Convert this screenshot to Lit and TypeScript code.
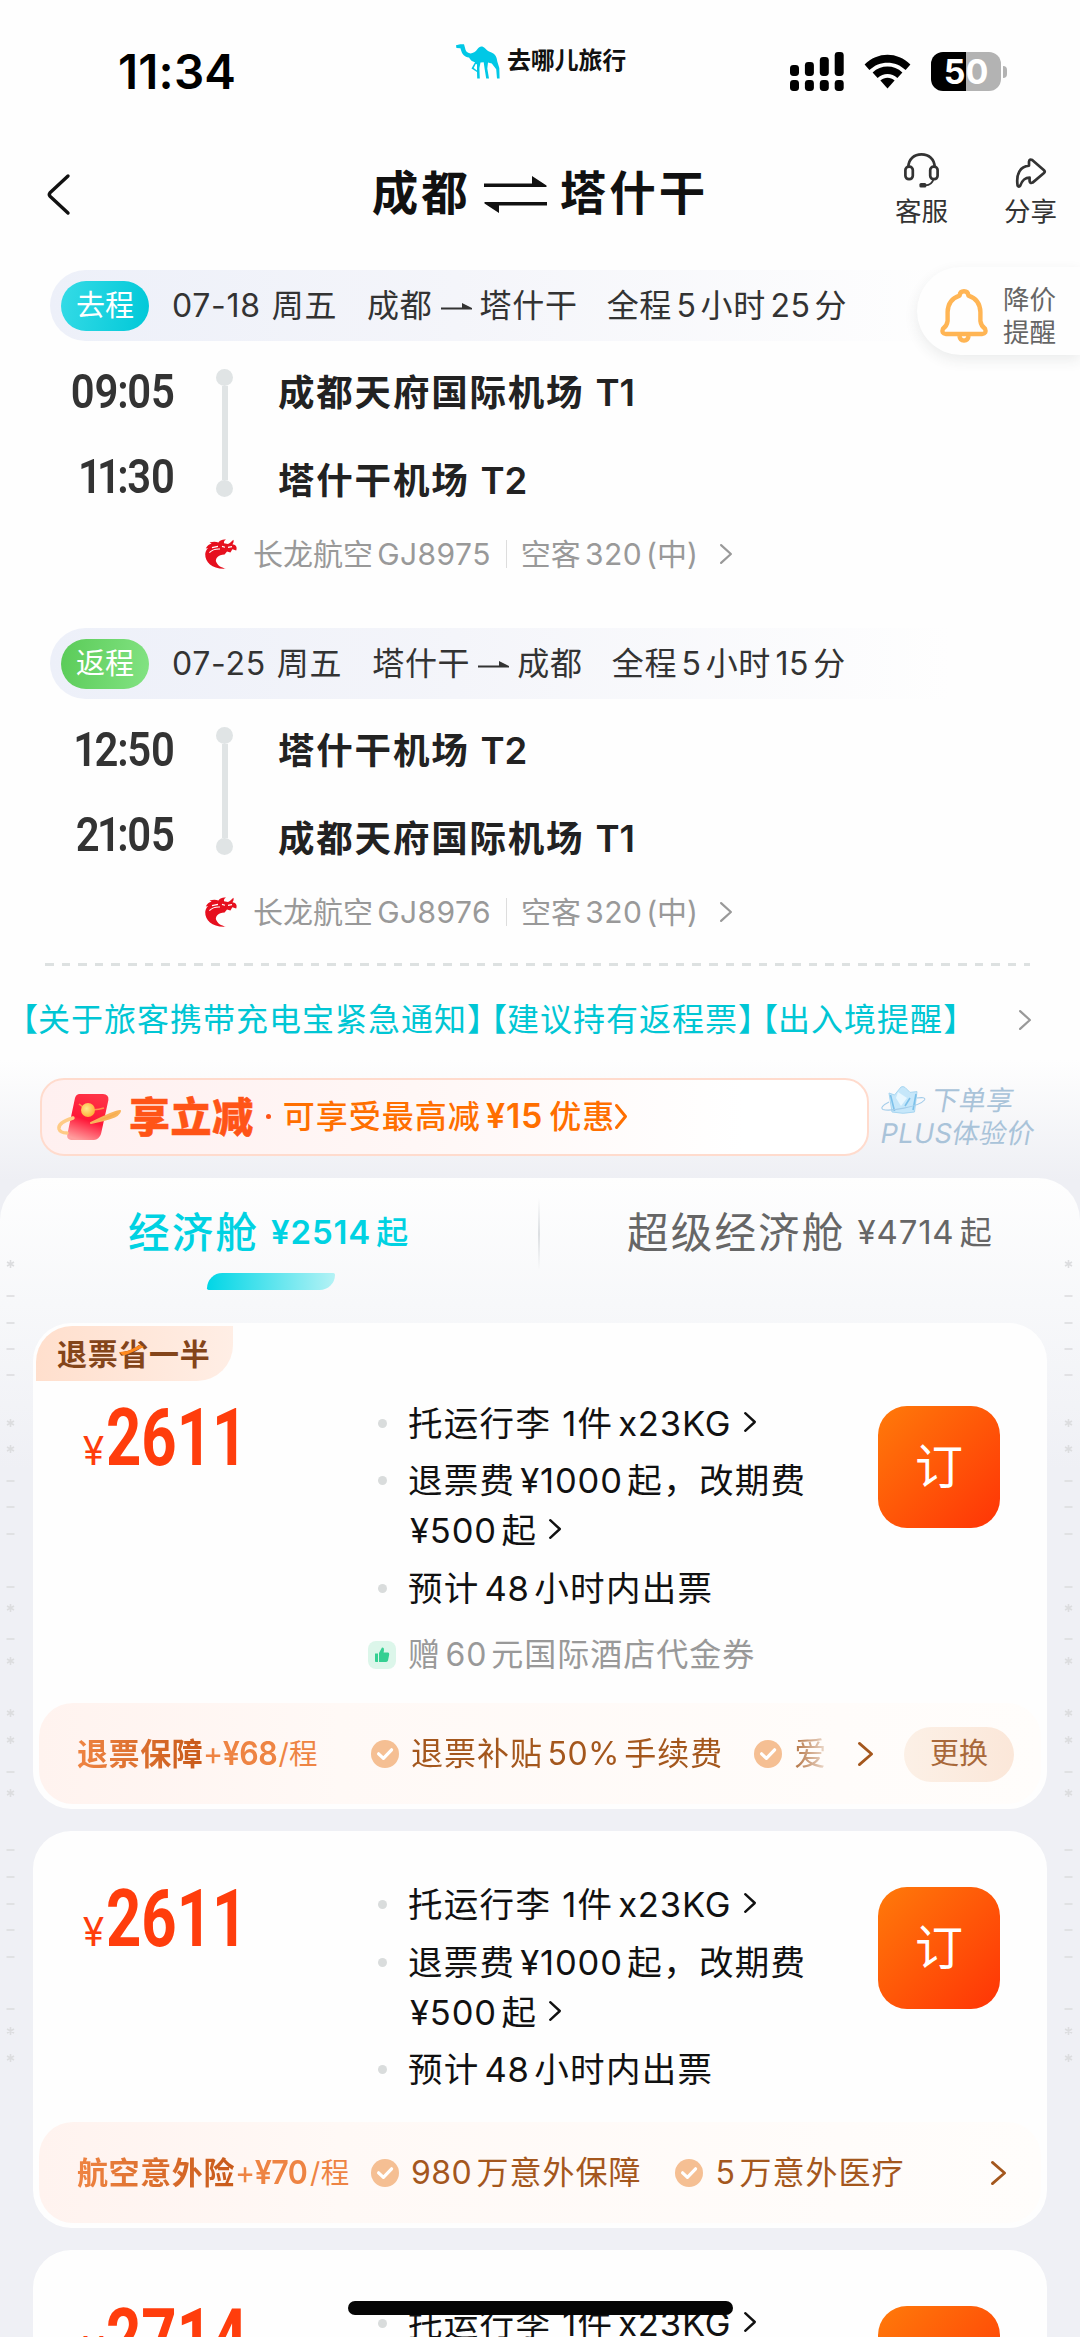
import { LitElement, html, css, svg, nothing } from "lit";
import { customElement, property } from "lit/decorators.js";

/** Wraps latin / digit runs so that they get a little air beside Chinese characters. */
const mix = (text: string) =>
  text
    .split(/([A-Za-z0-9¥%]+)/)
    .filter((part) => part !== "")
    .map((part, i) =>
      /^[A-Za-z0-9¥%]/.test(part) ? html`<span class="n ${i === 0 ? "lead" : ""}">${part}</span>` : part
    );

const base = css`
  * {
    box-sizing: border-box;
  }
  svg {
    display: block;
    flex: none;
    overflow: visible;
  }
  .n {
    margin: 0 0.13em 0 0.14em;
    letter-spacing: 0.015em;
  }
  .n.lead {
    margin-left: 0;
  }
`;

const chevron = (w: number, h: number, stroke: number) => html`
  <svg class="chevron" width=${w} height=${h} viewBox="0 0 ${w} ${h}" fill="none" stroke="currentColor"
    stroke-width=${stroke} stroke-linecap="round" stroke-linejoin="round">
    <path d="M${stroke / 2} ${stroke / 2} L${w - stroke / 2} ${h / 2} L${stroke / 2} ${h - stroke / 2}" />
  </svg>
`;

@customElement("status-bar")
class StatusBar extends LitElement {
  static styles = [
    base,
    css`
      :host {
        display: grid;
        grid-template-columns: 455px 1fr 217px;
        margin-right: 73px;
        height: 143px;
        align-items: center;
        color: #000;
      }
      .time {
        padding-left: 118px;
        font-size: 47.5px;
        font-weight: 600;
        line-height: 50px;
        letter-spacing: 0.2px;
      }
      .brand {
        display: flex;
        align-items: center;
        gap: 7px;
        margin-top: -21px;
      }
      .brand b {
        font-size: 24px;
        line-height: 34px;
        letter-spacing: -0.2px;
        color: #111;
      }
      .icons {
        display: flex;
        align-items: center;
        justify-content: space-between;
      }
      .battery {
        display: grid;
        width: 70px;
        height: 39px;
        place-items: center;
        border-radius: 12px;
        background: linear-gradient(90deg, #000 50%, #b3b3b3 50%);
        color: #fff;
        font-size: 34px;
        font-weight: 700;
        line-height: 39px;
        margin-right: 2px;
      }
      .power {
        display: flex;
        align-items: center;
      }
      .nub {
        width: 4px;
        height: 12px;
        border-radius: 0 4px 4px 0;
        background: #b3b3b3;
      }
    `,
  ];
  render() {
    return html`
      <div class="time">11:34</div>
      <div class="brand">
        <svg width="45" height="35" viewBox="0 0 45 35" fill="#00c8e6">
          <path d="M1 1.2 L5.2 .2 L9 .3 L10 3.8 C10.5 7 12 9 15.5 9.6 C18 9 20.5 8 22.5 5 C24.5 1.9 27.5 1.7 30 4.2 C32 6.5 34 7.6 36.5 8.6 C40.5 10.3 41.8 13.5 42.3 17.5 L44.3 24 L44.6 34.6 L42 34.6 L41.2 25.2 L36.8 19.6 L33 18.4 L32.3 24.5 L34 34.6 L31.2 34.6 L29.6 24.5 L28.7 18.2 L25.5 18.6 L24.4 24 L24.8 34.6 L22.2 34.6 L22 28 L16.5 24.4 L20 18.3 C17 17.6 15.6 16.4 14 13.6 C9.5 12.8 7.2 10.6 6.2 6.8 L5.4 4.2 L1.4 4 Z M20.7 20 L18.7 24 L22 26.5 L22 20.2 Z" fill-rule="evenodd" />
        </svg>
        <b>去哪儿旅行</b>
      </div>
      <div class="icons">
        <svg width="54" height="39" viewBox="0 0 54 39">
          ${[13, 10, 5, 0].map(
            (y, i) => svg`<rect x=${i * 14.9} y=${y} width="9" height=${24 - y} rx="3.4" />
              <rect x=${i * 14.9} y="28" width="9" height="11" rx="3.4" />`
          )}
        </svg>
        <svg width="47" height="36" viewBox="0 0 47 36">
          <path d="M0.6 10.6 C13.5 -2.6 33.5 -2.6 46.4 10.6 L41.6 16 C31.5 6.2 15.5 6.2 5.4 16 Z" />
          <path d="M8.6 18.5 C17 10.6 30 10.6 38.4 18.5 L33.4 24 C27.6 18.8 19.4 18.8 13.6 24 Z" />
          <path d="M16.4 26.4 C20.6 23 26.4 23 30.6 26.4 L23.5 34.6 Z" />
        </svg>
        <div class="power">
          <div class="battery">50</div>
          <div class="nub"></div>
        </div>
      </div>
    `;
  }
}

@customElement("nav-bar")
class NavBar extends LitElement {
  static styles = [
    base,
    css`
      :host {
        display: grid;
        grid-template-columns: 1fr auto 1fr;
        height: 98px;
        color: #111;
      }
      .back {
        align-self: center;
        padding: 4px 0 0 47px;
      }
      h1 {
        display: flex;
        align-items: center;
        gap: 16px;
        margin: 0;
        padding-top: 2px;
        align-self: center;
        font-size: 46.5px;
        font-weight: 700;
        line-height: 60px;
        letter-spacing: 3px;
      }
      .swap {
        margin: 2px 0 0 -3px;
      }
      h1 span:last-child {
        margin-left: -3px;
      }
      .actions {
        display: flex;
        justify-content: flex-end;
        gap: 56px;
        padding-right: 23px;
        color: #333;
        font-size: 26.5px;
        line-height: 32px;
      }
      .action {
        display: flex;
        flex-direction: column;
        align-items: center;
        padding-top: 10px;
        gap: 7px;
      }
      .share {
        padding-top: 15px;
        gap: 7px;
      }
    `,
  ];
  render() {
    return html`
      <div class="back">
        <svg width="23" height="41" viewBox="0 0 23 41" fill="none" stroke="#111" stroke-width="3.4" stroke-linecap="round" stroke-linejoin="round">
          <path d="M21 2 L3 18.8 Q1.6 20.5 3 22.2 L21 39" />
        </svg>
      </div>
      <h1>
        <span>成都</span>
        <svg class="swap" width="63" height="37" viewBox="0 0 63 37" fill="#111">
          <path d="M0 7.5 H48 V0 L62.5 9.5 V11 H0 Z" />
          <path d="M63 29.5 H15 V37 L.5 27.5 V26 H63 Z" />
        </svg>
        <span>塔什干</span>
      </h1>
      <div class="actions">
        <div class="action">
          <svg width="35" height="35" viewBox="0 0 35 35" fill="none" stroke="#333" stroke-width="2.7">
            <path d="M4.3 14 C4.6 6 10 1.4 17.5 1.4 C25 1.4 30.4 6 30.7 14" />
            <rect x="1.4" y="13.6" width="7.4" height="12.6" rx="3.5" />
            <rect x="26.2" y="13.6" width="7.4" height="12.6" rx="3.5" />
            <path d="M29.4 26.5 C28.4 30 25.6 32.2 21.5 32.4" stroke-width="1.8" />
            <rect x="15.4" y="30" width="7" height="4.6" rx="1.6" fill="#333" stroke="none" />
          </svg>
          <span>客服</span>
        </div>
        <div class="action share">
          <svg width="30" height="30" viewBox="0 0 30 30" fill="none" stroke="#333" stroke-width="2.7" stroke-linejoin="round">
            <path d="M1.6 27.6 C-.2 15.5 4.5 8.4 13 7.6 L13 3.6 Q13.5 .6 16.2 2 L28 12.2 Q29.4 13.6 28 15 L16.6 24.6 Q14 25.6 13.6 23 L13.6 19.6 C8.6 19.6 6.4 22 4.4 27.4 Q2.8 29.6 1.6 27.6 Z" />
          </svg>
          <span>分享</span>
        </div>
      </div>
    `;
  }
}

interface Leg {
  kind: "out" | "back";
  label: string;
  date: string;
  weekday: string;
  from: string;
  to: string;
  total: string;
  times: [string, string];
  airports: [string, string];
  flight: string;
  plane: string;
}

@customElement("flight-leg")
class FlightLeg extends LitElement {
  @property({ attribute: false }) leg!: Leg;
  static styles = [
    base,
    css`
      :host {
        display: block;
      }
      .head {
        display: flex;
        align-items: center;
        width: 900px;
        height: 71px;
        margin-left: 50px;
        padding-left: 11px;
        border-radius: 36px 0 0 36px;
        background: linear-gradient(90deg, #edf0f9, #f4f5fa 45%, #fefefe);
        color: #333;
        font-size: 32px;
        line-height: 44px;
        letter-spacing: 0.7px;
      }
      .badge {
        width: 88px;
        height: 50px;
        border-radius: 25px;
        margin-right: 23px;
        background: linear-gradient(100deg, #35dbe6, #00c8d8);
        color: #fff;
        font-size: 29px;
        line-height: 50px;
        text-align: center;
        letter-spacing: 0;
      }
      .badge.back {
        background: linear-gradient(100deg, #5acb58, #83e383);
      }
      .weekday {
        margin-left: 11px;
      }
      .route {
        display: flex;
        align-items: center;
        gap: 8px;
        margin: 0 29px 0 30px;
      }
      .stops {
        display: grid;
        grid-template-columns: 175px 17px 1fr;
        height: 178px;
      }
      .times,
      .airports {
        display: flex;
        flex-direction: column;
        line-height: 50px;
      }
      .times {
        padding-top: 26px;
        gap: 35px;
        font-family: Roboto, sans-serif;
        font-size: 47.5px;
        font-weight: 650;
        color: #333;
        text-align: right;
        transform: scaleX(0.88);
        transform-origin: right;
      }
      .colon {
        margin: 0 -1.5px;
      }
      .one {
        margin: 0 -2.8px;
      }
      .track {
        display: flex;
        flex-direction: column;
        align-items: center;
        width: 17px;
        height: 128px;
        margin: 28px 0 0 41px;
      }
      .dot {
        width: 17px;
        height: 17px;
        border-radius: 50%;
        background: #e0e4e5;
      }
      .line {
        flex: 1;
        width: 6px;
        background: #e0e4e5;
      }
      .airports {
        padding: 27px 0 0 86px;
        gap: 38px;
        font-size: 36.5px;
        font-weight: 600;
        letter-spacing: 1.8px;
        color: #222;
      }
      .airports .n {
        margin-left: 0;
        letter-spacing: 0;
        font-size: 36.5px;
      }
      .flight {
        display: flex;
        align-items: center;
        height: 70px;
        padding-left: 204px;
        color: #999;
        font-size: 30px;
        line-height: 40px;
      }
      .logo {
        margin-right: 15px;
      }
      .sep {
        width: 1px;
        height: 28px;
        margin: 0 14px 0 11px;
        background: #ddd;
      }
      .chevron {
        margin-left: 22px;
      }
    `,
  ];
  render() {
    const l = this.leg;
    return html`
      <div class="head">
        <div class="badge ${l.kind}">${l.label}</div>
        <div>${l.date}</div>
        <div class="weekday">${l.weekday}</div>
        <div class="route">
          <span>${l.from}</span>
          <svg width="31" height="8" viewBox="0 0 31 8" fill="#333"><path d="M0 5.4 H21 V1 L31 6 V7.4 H0 Z" /></svg>
          <span>${l.to}</span>
        </div>
        <div>${mix(l.total)}</div>
      </div>
      <div class="stops">
        <div class="times">
          ${l.times.map(
            (t) => html`<div>${[...t].map((c) =>
              c === ":" ? html`<span class="colon">:</span>` : c === "1" ? html`<span class="one">1</span>` : c
            )}</div>`
          )}
        </div>
        <div class="track"><div class="dot"></div><div class="line"></div><div class="dot"></div></div>
        <div class="airports">${l.airports.map((a) => html`<div>${mix(a)}</div>`)}</div>
      </div>
      <div class="flight">
        <svg class="logo" width="34" height="30" viewBox="0 0 34 30" fill="#e60f1e">
          <path d="M22 29.6 C9 30.5 1 24 1.2 15 C1.6 12 2.6 10.4 4.2 9 L1.8 9.6 C3 6.8 5 5.4 7.6 4.8 L5.6 3.6 C9 2.4 12 2.6 14.4 3.4 C16.4 .6 19.4 .2 22 .6 C20.4 1.6 19.8 2.6 20 4.2 L24 5 C26 4.2 27.4 2.6 29.4 .8 C30 2.6 29.4 4 28.4 5.2 L31 6 C32.8 7.6 33 9.6 32.2 11.4 L28.4 10.2 L26.4 13.4 L23 12.6 L20.6 15.4 C14 16 11.4 19 12 22.6 C13.4 26.4 17 28.8 22 29.6 Z" />
          <path d="M8 8.6 L14 7.4 M5.4 13.6 C8 10.8 12 9.8 16 10 M18 7.4 L21 8.2 M24 8.4 L28 7.6" stroke="#fff" stroke-width="1.1" fill="none" />
        </svg>
        <span>${mix(l.flight)}</span>
        <span class="sep"></span>
        <span>${mix(l.plane)}</span>
        ${chevron(12, 20, 2.2)}
      </div>
    `;
  }
}

interface Fare {
  tag?: string;
  price: string;
  gift?: string;
  cover?: { name: string; price: string; perks: string[]; swap: boolean };
}

@customElement("fare-card")
class FareCard extends LitElement {
  @property({ attribute: false }) fare!: Fare;
  static styles = [
    base,
    css`
      :host {
        display: block;
        position: relative;
        margin: 0 33px;
        padding-bottom: 5px;
        border-radius: 38px;
        background: #fefefe;
      }
      .tag {
        position: absolute;
        left: 3px;
        top: 3px;
        width: 197px;
        height: 55px;
        padding-left: 21px;
        border-radius: 36px 0 36px 0;
        background: linear-gradient(90deg, #ffdfcd, #ffeee5);
        color: #84451a;
        font-size: 30px;
        font-weight: 700;
        line-height: 56px;
        letter-spacing: 0.7px;
      }
      .tick {
        position: absolute;
        left: 84px;
        top: 19px;
      }
      .body {
        display: grid;
        grid-template-columns: 335px 510px 122px;
        align-items: start;
      }
      .tagged {
        padding-top: 27px;
      }
      .price {
        display: flex;
        align-items: baseline;
        padding: 48px 0 0 48px;
        color: #ff3d0c;
        line-height: 80px;
      }
      .yen {
        display: flex;
        justify-content: center;
        width: 25px;
        font-size: 39px;
      }
      .amount {
        font-family: Roboto, sans-serif;
        font-size: 79px;
        font-weight: 700;
        transform: scaleX(0.78);
        transform-origin: left;
      }
      .facts {
        margin: 0;
        padding: 49px 0 27px;
        list-style: none;
        display: flex;
        flex-direction: column;
        gap: 7.5px;
      }
      .facts.gifted {
        padding-bottom: 23px;
      }
      .facts li {
        display: grid;
        grid-template-columns: 29px 1fr;
        column-gap: 11px;
        color: #111;
        font-size: 34.5px;
        line-height: 50px;
        letter-spacing: 1.3px;
        white-space: nowrap;
      }
      .facts .yens {
        margin-left: 2px;
      }
      .facts .n {
        letter-spacing: 0.025em;
      }
      .bullet {
        width: 9px;
        height: 9px;
        margin: 20px 0 0 10px;
        border-radius: 50%;
        background: #d9dcdc;
      }
      .facts .chevron {
        display: inline-block;
        margin: 0 0 4px 1px;
      }
      .facts .n + .chevron {
        margin-left: -3px;
      }
      .facts .gift {
        margin-top: 9px;
        color: #999;
        font-size: 32px;
        letter-spacing: 1px;
      }
      .thumb {
        margin-top: 11px;
      }
      .book {
        width: 122px;
        height: 122px;
        margin-top: 56px;
        border: 0;
        padding: 0;
        border-radius: 29px;
        background: linear-gradient(135deg, #ff7a0a, #ff3406);
        color: #fff;
        font-family: inherit;
        font-size: 48px;
        line-height: 120px;
      }
      .cover {
        display: grid;
        grid-template-columns: 294px 1fr auto auto;
        align-items: center;
        height: 101px;
        margin: 0 6px;
        padding: 1px 27px 0 38px;
        border-radius: 34px;
        background: linear-gradient(90deg, #fff3ef, #fff9f6 30%, #fffcfa 80%, #fffdfb);
        color: #a4571d;
        font-size: 32px;
        line-height: 44px;
        letter-spacing: 1px;
        white-space: nowrap;
      }
      .name {
        display: flex;
        font-size: 31px;
        letter-spacing: 0.6px;
      }
      .name b {
        background: linear-gradient(90deg, #ef8442, #c85a1a);
        background-clip: text;
        color: transparent;
      }
      .extra {
        font-size: 32px;
        font-weight: 600;
        color: #ee8443;
        letter-spacing: -0.5px;
        transform: scaleX(0.95);
        transform-origin: left;
        width: 75px;
      }
      .extra i {
        font-style: normal;
        font-weight: 400;
      }
      .per {
        color: #ee8443;
        font-size: 28.5px;
        letter-spacing: 0.4px;
      }
      .perks {
        display: flex;
        gap: 34px;
      }
      .perks.fade {
        mask-image: linear-gradient(90deg, #000 91%, transparent 102%);
        width: 456px;
        gap: 31px;
      }
      .perk {
        display: flex;
        align-items: center;
        gap: 12px;
      }
      .go {
        margin-right: 8px;
      }
      .go.swap {
        margin-right: 31px;
      }
      .pill {
        width: 110px;
        height: 55px;
        border-radius: 28px;
        background: linear-gradient(90deg, #fcf0e6, #fbe7d9);
        color: #a8683a;
        font-size: 29px;
        line-height: 54px;
        text-align: center;
        letter-spacing: 0;
      }
    `,
  ];
  render() {
    const f = this.fare;
    const mark = html`<span class="bullet"></span>`;
    const arrow = chevron(12, 20, 2.4);
    return html`
      ${f.tag
        ? html`<div class="tag">
            ${f.tag}
            <svg class="tick" width="24" height="14" viewBox="0 0 24 14"><path d="M0 7 Q2 12 8 9 L24 2 L20 0 L8 6 Z" fill="#ff8a1f" /></svg>
          </div>`
        : nothing}
      <div class="body ${f.tag ? "tagged" : ""}">
        <div class="price"><span class="yen">¥</span><span class="amount">${f.price}</span></div>
        <ul class="facts ${f.gift ? "gifted" : ""}">
          <li>${mark}<span>托运行李 1件<span class="n">x23KG</span>${arrow}</span></li>
          <li>${mark}<span>${mix("退票费¥1000起，改期费")}<br /><span class="yens">${mix("¥500起")}</span>${arrow}</span></li>
          <li>${mark}<span>${mix("预计48小时内出票")}</span></li>
          ${f.gift
            ? html`<li class="gift">
                <svg class="thumb" width="28" height="28" viewBox="0 0 28 28">
                  <rect width="28" height="28" rx="8" fill="#dcf6ea" />
                  <path d="M7 12.4 H10 V21 H7.8 Q7 21 7 20.2 Z M11 12 L14 6.6 Q16.2 6.4 16 9 L15.6 11.6 H20 Q21.4 11.8 21.2 13.4 L20 19.6 Q19.6 21 18.2 21 H11 Z" fill="#35cf92" />
                </svg>
                <span>${mix(f.gift)}</span>
              </li>`
            : nothing}
        </ul>
        <button class="book">订</button>
      </div>
      ${f.cover
        ? html`<div class="cover">
            <div class="name">
              <b>${f.cover.name}</b><span class="extra"><i>+</i>${f.cover.price}</span><span class="per">/程</span>
            </div>
            <div class="perks ${f.cover.swap ? "fade" : ""}">
              ${f.cover.perks.map(
                (p) => html`<div class="perk">
                  <svg width="28" height="28" viewBox="0 0 28 28">
                    <circle cx="14" cy="14" r="14" fill="#f5bf93" />
                    <path d="M7.6 13.8 L12.4 18.4 L20.6 9.8" fill="none" stroke="#fff" stroke-width="3.2" stroke-linecap="round" stroke-linejoin="round" />
                  </svg>
                  <span>${mix(p)}</span>
                </div>`
              )}
            </div>
            <div class="go ${f.cover.swap ? "swap" : ""}">${chevron(15, 24, 2.8)}</div>
            ${f.cover.swap ? html`<div class="pill">更换</div>` : nothing}
          </div>`
        : nothing}
    `;
  }
}

const LEGS: Leg[] = [
  {
    kind: "out",
    label: "去程",
    date: "07-18",
    weekday: "周五",
    from: "成都",
    to: "塔什干",
    total: "全程5小时25分",
    times: ["09:05", "11:30"],
    airports: ["成都天府国际机场 T1", "塔什干机场 T2"],
    flight: "长龙航空GJ8975",
    plane: "空客320(中)",
  },
  {
    kind: "back",
    label: "返程",
    date: "07-25",
    weekday: "周五",
    from: "塔什干",
    to: "成都",
    total: "全程5小时15分",
    times: ["12:50", "21:05"],
    airports: ["塔什干机场 T2", "成都天府国际机场 T1"],
    flight: "长龙航空GJ8976",
    plane: "空客320(中)",
  },
];

const NOTICES = ["关于旅客携带充电宝紧急通知", "建议持有返程票", "出入境提醒"];

const FARES: Fare[] = [
  {
    tag: "退票省一半",
    price: "2611",
    gift: "赠60元国际酒店代金券",
    cover: { name: "退票保障", price: "¥68", perks: ["退票补贴50%手续费", "爱"], swap: true },
  },
  {
    price: "2611",
    cover: { name: "航空意外险", price: "¥70", perks: ["980万意外保障", "5万意外医疗"], swap: false },
  },
  { price: "2714" },
];

/** Faint marks down both edges of the fare list: [y, is star]. */
const MARKS: [number, boolean][] = [
  [86, true], [118, false], [145, false], [171, false], [197, false], [245, true], [271, true],
  [303, false], [329, false], [356, false], [409, false], [430, true], [461, false], [483, true],
  [535, true], [562, true], [594, false], [615, true], [672, false], [699, false], [726, false],
  [752, false], [779, false], [831, false], [853, true], [880, true],
];

@customElement("app-root")
class AppRoot extends LitElement {
  static styles = [
    base,
    css`
      :host {
        display: block;
        position: relative;
        width: 1080px;
        height: 2337px;
        overflow: hidden;
        background: linear-gradient(180deg, #fefefe 1060px, #eeeff4 1180px);
        font-family: Inter, "Noto Sans CJK SC", sans-serif;
      }
      .legs {
        display: flex;
        flex-direction: column;
        gap: 39px;
        padding-top: 29px;
      }
      .dash {
        height: 2.5px;
        margin: 16px 50px 0 45px;
        background: repeating-linear-gradient(90deg, #dde1e1 0 8.5px, transparent 8.5px 16.6px);
      }
      .alert {
        position: absolute;
        right: 0;
        top: 267px;
        display: flex;
        align-items: center;
        gap: 15px;
        width: 163px;
        height: 88px;
        padding: 9px 0 0 23px;
        border-radius: 44px 0 0 44px;
        background: #fefefe;
        box-shadow: 0 5px 14px rgba(40, 60, 60, 0.09);
        color: #666;
        font-size: 26.5px;
        line-height: 33px;
      }
      .notice {
        display: flex;
        align-items: center;
        justify-content: space-between;
        height: 112px;
        padding: 0 49px 3px 22px;
        color: #00c6d4;
        font-size: 32px;
        line-height: 44px;
        letter-spacing: 1px;
      }
      .notice .list {
        display: flex;
        gap: 8px;
      }
      .half {
        font-feature-settings: "halt";
        letter-spacing: 0;
      }
      .notice .chevron {
        color: #999;
      }
      .offers {
        display: flex;
        align-items: center;
        height: 78px;
        margin: 0 40px;
      }
      .promo {
        display: flex;
        align-items: center;
        width: 829px;
        height: 78px;
        padding-left: 15px;
        border: 2px solid #ffdbcd;
        border-radius: 24px;
        background: linear-gradient(90deg, #fff0f0, #fff7f6 45%, #fff 85%);
        color: #ff6f00;
        font-size: 32px;
        font-weight: 500;
        line-height: 44px;
        letter-spacing: 1px;
      }
      .promo .n {
        margin: 0 0.18em 0 0.15em;
        font-weight: 600;
        font-size: 34px;
        letter-spacing: 0.8px;
      }
      .promo b {
        margin: 0 12px 0 8px;
        color: #ff5417;
        font-size: 41px;
        font-weight: 900;
        letter-spacing: 0.6px;
        -webkit-text-stroke: 0.5px #ff5417;
      }
      .point {
        width: 5px;
        height: 5px;
        margin-right: 12px;
        border-radius: 50%;
        background: #ff5417;
      }
      .promo .chevron {
        margin-left: 0;
      }
      .plus {
        padding-left: 12px;
        color: #a9c3d9;
        font-size: 27px;
        line-height: 33px;
        white-space: nowrap;
      }
      .plus div {
        display: flex;
        align-items: center;
        gap: 6px;
      }
      .plus span {
        transform: skewX(-10deg);
        letter-spacing: 0.4px;
      }
      .panel {
        position: relative;
        height: 1160px;
        margin-top: 22.5px;
        border-radius: 42px 42px 0 0;
        background: linear-gradient(180deg, #fefefe, #f7f8fa 125px, #eff0f5 290px);
      }
      .marks {
        position: absolute;
        left: 6px;
        top: 0;
      }
      .tabs {
        display: grid;
        grid-template-columns: 538px 2px 538px;
        height: 144.5px;
      }
      .tab {
        display: flex;
        align-items: center;
        align-self: start;
        padding: 30px 0 0 87px;
        color: #666;
        font-size: 41.5px;
        line-height: 50px;
        letter-spacing: 2.2px;
      }
      .tab small {
        margin-left: 12px;
        margin-top: -1px;
        font-size: 32px;
        letter-spacing: 0;
      }
      .tab .n {
        margin-right: 0.16em;
        font-size: 33px;
        letter-spacing: 0.025em;
      }
      .tab.on {
        padding-left: 128px;
        color: #00d2e2;
        font-weight: 500;
      }
      .tab.on .n {
        font-weight: 600;
      }
      .column {
        display: flex;
        flex-direction: column;
      }
      .under {
        width: 128px;
        height: 17px;
        margin: 15px 0 0 207px;
        border-radius: 18px 2px 18px 2px;
        background: linear-gradient(90deg, #00d6e6, #b4f2f5);
      }
      .divider {
        height: 72px;
        margin-top: 20px;
        background: linear-gradient(180deg, transparent, #dcdfe2, transparent);
      }
      .fares {
        display: flex;
        flex-direction: column;
        gap: 22px;
      }
      .home {
        position: absolute;
        left: 348px;
        top: 2301px;
        width: 385px;
        height: 14px;
        border-radius: 7px;
        background: #050505;
      }
    `,
  ];

  private marks() {
    return html`<svg class="marks" width="1068" height="900" viewBox="0 0 1068 900" stroke="#dcdddf" stroke-width="1.6">
      ${[4.5, 1062.5].map((x) =>
        MARKS.map(([y, star]) =>
          star
            ? svg`<path d="M${x} ${y - 4} v8 M${x - 3.5} ${y - 2} l7 4 M${x - 3.5} ${y + 2} l7 -4" />`
            : svg`<path d="M${x - 4} ${y} h8" />`
        )
      )}
    </svg>`;
  }

  render() {
    return html`
      <status-bar></status-bar>
      <nav-bar></nav-bar>
      <div class="legs">${LEGS.map((leg) => html`<flight-leg .leg=${leg}></flight-leg>`)}</div>
      <div class="dash"></div>
      <div class="notice">
        <div class="list">
          ${NOTICES.map((n) => html`<span><span class="half">【</span>${n}<span class="half">】</span></span>`)}
        </div>
        ${chevron(12, 20, 2.2)}
      </div>
      <div class="offers">
        <div class="promo">
          <svg width="64" height="48" viewBox="0 0 64 48">
            <defs>
              <linearGradient id="packet" x1="0.6" y1="0" x2="0.3" y2="1">
                <stop offset="0" stop-color="#ff3346" />
                <stop offset="0.55" stop-color="#ff1738" />
                <stop offset="1" stop-color="#ff9d9d" />
              </linearGradient>
              <radialGradient id="coin" cx="0.4" cy="0.4" r="0.7">
                <stop offset="0" stop-color="#ffe98c" />
                <stop offset="1" stop-color="#ffa62e" />
              </radialGradient>
            </defs>
            <path d="M22 1 H46 Q52 1.6 51.4 7 L44 41 Q42 46.6 37 47 H14 Q9 46 10.4 41 L18 5 Q19 1.4 22 1 Z" fill="url(#packet)" />
            <path d="M22 11 Q32 20 47 15" fill="none" stroke="#ff8f4d" stroke-width="1.6" />
            <path d="M16 25 C6 28 1 32 2 36 C3 39 6 40 10 40" fill="none" stroke="#ffcb85" stroke-width="3.4" stroke-linecap="round" />
            <path d="M34 30 C48 27 62 24 63 18 C58 18 46 24 34 30 Z" fill="#f8ac4e" stroke="#f8b45c" stroke-width="2" stroke-linejoin="round" />
            <circle cx="31" cy="17" r="7" fill="url(#coin)" />
          </svg>
          <b>享立减</b>
          <span class="point"></span>
          <span>${mix("可享受最高减¥15优惠")}</span>
          ${chevron(12, 25, 3)}
        </div>
        <div class="plus">
          <div>
            <svg width="45" height="28" viewBox="0 0 45 28" fill="none">
              <path d="M8 7 L13.5 9 L20 1 Q22 0 24 1.4 L29 6.4 L36 5.6 L33.5 26 Q22 28.6 11 26 Z" fill="#c6e7fa" stroke="#a8d6f1" stroke-width="1" />
              <path d="M9.5 9 L13.5 25 M35 8 L32 24 M24 20 L29 12" stroke="#7cc1ea" stroke-width="1.6" />
              <path d="M17 6 L26 12 L20 20 L15 12 Z" fill="#e8f7ff" />
              <path d="M8 16 C2 19 -1 22 2 23.4 C8 25.6 38 21 43.5 14 C45 11.4 41 11.2 36 12" stroke="#a4cdea" stroke-width="1.1" />
            </svg>
            <span>下单享</span>
          </div>
          <div><span>PLUS体验价</span></div>
        </div>
      </div>
      <div class="panel">
        ${this.marks()}
        <div class="tabs">
          <div class="column">
            <div class="tab on">经济舱<small>${mix("¥2514起")}</small></div>
            <div class="under"></div>
          </div>
          <div class="divider"></div>
          <div class="tab">超级经济舱<small>${mix("¥4714起")}</small></div>
        </div>
        <div class="fares">${FARES.map((fare) => html`<fare-card .fare=${fare}></fare-card>`)}</div>
      </div>
      <div class="alert">
        <svg width="48" height="54" viewBox="0 0 48 54" fill="none" stroke="#ffb554" stroke-width="4.4" stroke-linejoin="round">
          <path d="M19.6 6.6 Q20 2.2 24 2.2 Q28 2.2 28.4 6.6 Q40 10.4 40.4 23 V32 Q41 37 45 39.6 Q47 44.6 42 45 H6 Q1 44.6 3 39.6 Q7 37 7.6 32 V23 Q8 10.4 19.6 6.6 Z" />
          <path d="M19.4 47 Q20 51.4 24 51.6 Q28 51.4 28.6 47" />
        </svg>
        <div>降价<br />提醒</div>
      </div>
      <div class="home"></div>
    `;
  }
}
